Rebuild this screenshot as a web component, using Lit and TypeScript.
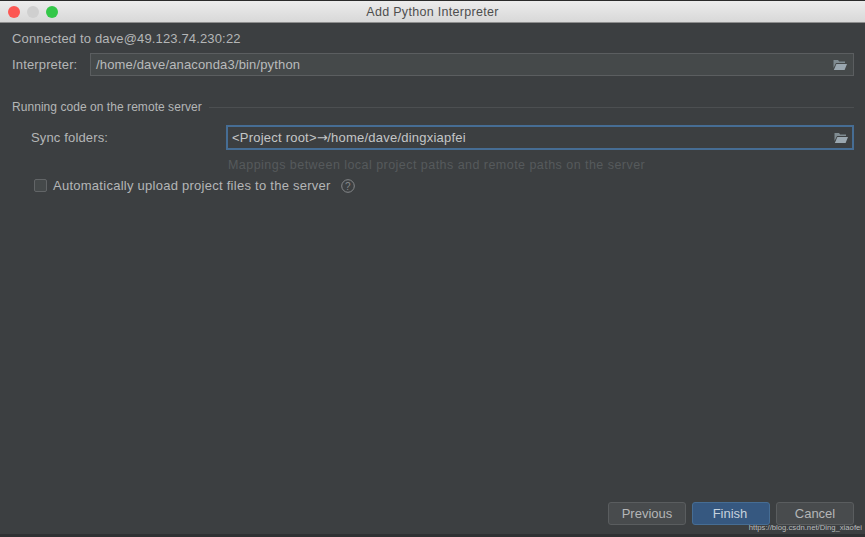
import { LitElement, html, css, svg } from "lit";
import { customElement } from "lit/decorators.js";

const folder = svg`<svg class="folder" width="14" height="12" viewBox="0 0 14 12"><path d="M0.5 1h4.5l1.2 1.5H12V4H3L0.5 9z" fill="#7f8b91"/><path d="M3.4 5H14l-2.4 6H0.8z" fill="#9aa7b0"/></svg>`;

@customElement("app-root")
export class AppRoot extends LitElement {
  static styles = css`
    :host { display: block; width: 865px; height: 537px; overflow: hidden; position: relative; background: #3c3f41; font-family: "Liberation Sans", Arial, sans-serif; font-size: 13px; color: #b4b6b7; letter-spacing: 0.15px; }
    .frame { display: flex; flex-direction: column; height: 537px; box-sizing: border-box; border-top: 1px solid #2a2a2a; border-bottom: 3px solid #2f3133; }
    .title { height: 21px; flex: none; display: flex; align-items: center; justify-content: center; position: relative; background: linear-gradient(#ececec, #d8d8d8); color: #4e4e4e; font-size: 12.5px; border-bottom: 1px solid #8e8e8e; letter-spacing: 0.3px; }
    .lights { position: absolute; left: 8px; top: 5px; display: flex; gap: 7px; }
    .light { width: 12px; height: 12px; border-radius: 50%; }
    .red { background: #fc5753; } .gray { background: #cfcfcf; } .green { background: #33c748; }
    .body { flex: 1; display: flex; flex-direction: column; padding: 8px 11px 0 12px; min-height: 0; }
    .conn { line-height: 16px; }
    .row { display: flex; align-items: center; }
    .interp { margin-top: 6px; }
    .interp label { width: 78px; flex: none; }
    .field { flex: 1; height: 23px; box-sizing: border-box; display: flex; align-items: center; justify-content: space-between; padding: 0 6px 0 5px; }
    .ro { background: #45494a; border: 1px solid #5b5e60; color: #b9bbbc; }
    .focus { background: #3c3f41; border: 2px solid #466d94; color: #c4c6c7; padding: 0 4px 0 4px; height: 25px; letter-spacing: 0.22px; }
    .arrow { font-family: "DejaVu Sans", sans-serif; font-size: 13px; letter-spacing: -0.4px; }
    .sec { margin-top: 23px; display: flex; align-items: center; gap: 7px; font-size: 12px; line-height: 16px; letter-spacing: 0.05px; }
    .sec i { flex: 1; height: 1px; background: #4c4f51; }
    .sync { margin: 10px 0 0 19px; }
    .sync label { width: 195px; flex: none; }
    .hint { margin: 7px 0 0 216px; color: #565a5c; font-size: 12.5px; line-height: 16px; letter-spacing: 0.46px; }
    .auto { margin: 5px 0 0 22px; letter-spacing: 0.26px; }
    .check { width: 13px; height: 13px; box-sizing: border-box; border: 1px solid #626567; border-radius: 2px; background: #45494a; margin-right: 6px; flex: none; }
    .help { margin-left: 10px; display: block; }
    .spacer { flex: 1; }
    .btns { display: flex; justify-content: flex-end; gap: 6px; margin-bottom: 9px; letter-spacing: 0; }
    .btn { width: 78px; height: 23px; box-sizing: border-box; border: 1px solid #5a5d5f; border-radius: 3px; background: #484b4d; color: #b4b6b7; display: flex; align-items: center; justify-content: center; }
    .primary { background: #365880; border-color: #466d94; color: #c6d2de; padding-right: 2px; }
    .mark { position: absolute; right: 3px; bottom: 5px; font-size: 7.7px; letter-spacing: 0; color: #b9bcbe; line-height: 9px; }
  `;

  render() {
    return html`<div class="frame">
      <div class="title">
        <div class="lights"><span class="light red"></span><span class="light gray"></span><span class="light green"></span></div>
        Add Python Interpreter
      </div>
      <div class="body">
        <div class="conn">Connected to dave@49.123.74.230:22</div>
        <div class="row interp"><label>Interpreter:</label><div class="field ro"><span>/home/dave/anaconda3/bin/python</span>${folder}</div></div>
        <div class="sec"><span>Running code on the remote server</span><i></i></div>
        <div class="row sync"><label>Sync folders:</label><div class="field focus"><span>&lt;Project root&gt;<span class="arrow">→</span>/home/dave/dingxiapfei</span>${folder}</div></div>
        <div class="hint">Mappings between local project paths and remote paths on the server</div>
        <div class="row auto"><span class="check"></span><span>Automatically upload project files to the server</span>
          <svg class="help" width="14" height="14" viewBox="0 0 14 14"><circle cx="7" cy="7" r="6.3" fill="none" stroke="#85888a"/><text x="7" y="10.5" text-anchor="middle" font-size="10" fill="#85888a">?</text></svg>
        </div>
        <div class="spacer"></div>
        <div class="btns"><div class="btn">Previous</div><div class="btn primary">Finish</div><div class="btn">Cancel</div></div>
      </div>
    </div>
    <div class="mark">https://blog.csdn.net/Ding_xiaofei</div>`;
  }
}
